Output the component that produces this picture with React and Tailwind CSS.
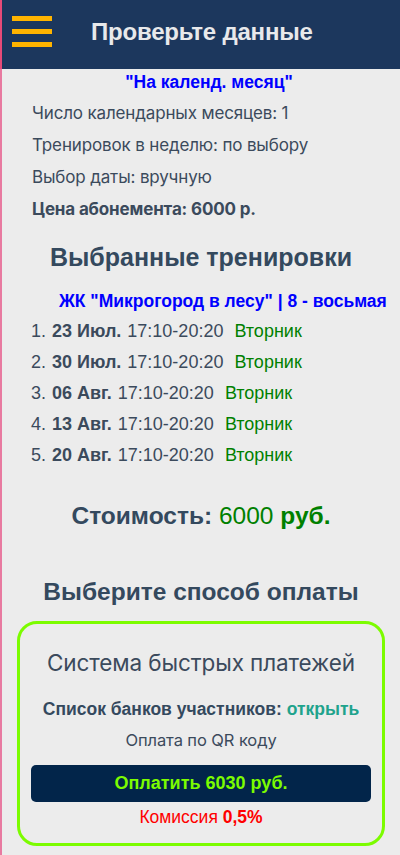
const sessions = [
  { date: '23 Июл.', time: '17:10-20:20', day: 'Вторник' },
  { date: '30 Июл.', time: '17:10-20:20', day: 'Вторник' },
  { date: '06 Авг.', time: '17:10-20:20', day: 'Вторник' },
  { date: '13 Авг.', time: '17:10-20:20', day: 'Вторник' },
  { date: '20 Авг.', time: '17:10-20:20', day: 'Вторник' },
]

export default function App() {
  return (
    <div className="w-[400px] min-h-[855px] bg-[#ececec] flex flex-col font-['Liberation_Sans',Arial,sans-serif]">
      {/* Header */}
      <header className="h-[69px] bg-[#1c375d] flex items-center border-l-2 border-[#e64a78]">
        <div className="ml-[10px] w-10 flex flex-col gap-[8px] mb-[6px]">
          <span className="block h-[5px] bg-[#ffb400]" />
          <span className="block h-[5px] bg-[#ffb400]" />
          <span className="block h-[5px] bg-[#ffb400]" />
        </div>
        <h1 className="ml-[39px] mb-[6px] text-[24px] font-bold text-[#e8e9eb] tracking-[-0.2px]">
          Проверьте данные
        </h1>
      </header>

      <main className="flex-1 flex flex-col border-l-2 border-[#e87aa0] text-[#34495e]">
        {/* Subscription summary */}
        <p className="pl-[16px] text-center text-[17.5px] font-bold text-[#0000ff] mt-[2px] leading-[22px]">
          "На календ. месяц"
        </p>
        <div className="pl-[30px] mt-[4px] flex flex-col font-['Inter',sans-serif] text-[17px] text-[#3b4a5c] leading-[32px] tracking-[-0.15px]">
          <p>Число календарных месяцев: 1</p>
          <p>Тренировок в неделю: по выбору</p>
          <p>Выбор даты: вручную</p>
          <p className="font-bold">Цена абонемента: 6000 р.</p>
        </div>

        {/* Selected sessions */}
        <h2 className="mt-[17px] text-center text-[25px] font-bold leading-[30px] text-[#34495e]">
          Выбранные тренировки
        </h2>
        <p className="mt-[18px] pl-[57px] text-[17.5px] font-bold text-[#0000ff] leading-[22px]">
          ЖК "Микрогород в лесу" | 8 - восьмая
        </p>
        <ol className="mt-[4px] pl-[29px] text-[18px] leading-[31px] text-[#3b4a5c]">
          {sessions.map((s, i) => (
            <li key={i} className="flex">
              <span className="w-[21px]">{i + 1}.</span>
              <span className="font-bold mr-[6px]">{s.date}</span>
              <span className="mr-[11px]">{s.time}</span>
              <span className="text-[#008000]">{s.day}</span>
            </li>
          ))}
        </ol>

        <p className="mt-[30px] text-center text-[24.5px] font-bold leading-[30px]">
          Стоимость: <span className="font-normal text-[#008000]">6000</span>{' '}
          <span className="text-[#008000]">руб.</span>
        </p>

        <h2 className="mt-[46px] text-center text-[24.5px] font-bold leading-[30px]">
          Выберите способ оплаты
        </h2>

        {/* Payment method card */}
        <div className="mx-[15px] mt-[14px] mb-[9px] border-[3px] border-[#7cfc00] rounded-[20px] px-[11px] pt-[24px] pb-[16px] flex flex-col items-center">
          <p className="font-['Inter',sans-serif] text-[22.5px] leading-[30px] text-[#3b4a5c] tracking-[-0.1px]">
            Система быстрых платежей
          </p>
          <p className="mt-[20px] text-[17.5px] font-bold leading-[22px] text-[#34495e]">
            Список банков участников: <span className="text-[#1fa38c]">открыть</span>
          </p>
          <p className="mt-[9px] font-['Inter',sans-serif] text-[16.5px] leading-[22px] text-[#3b4a5c] tracking-[-0.1px]">
            Оплата по QR коду
          </p>
          <button className="mt-[14px] w-full h-[37px] rounded-[5px] bg-[#02254a] text-[#7cfc00] text-[18px] font-bold">
            Оплатить 6030 руб.
          </button>
          <p className="mt-[5px] text-[17.5px] leading-[20px] text-[#ff0000]">
            Комиссия <span className="font-bold">0,5%</span>
          </p>
        </div>
      </main>
    </div>
  )
}
